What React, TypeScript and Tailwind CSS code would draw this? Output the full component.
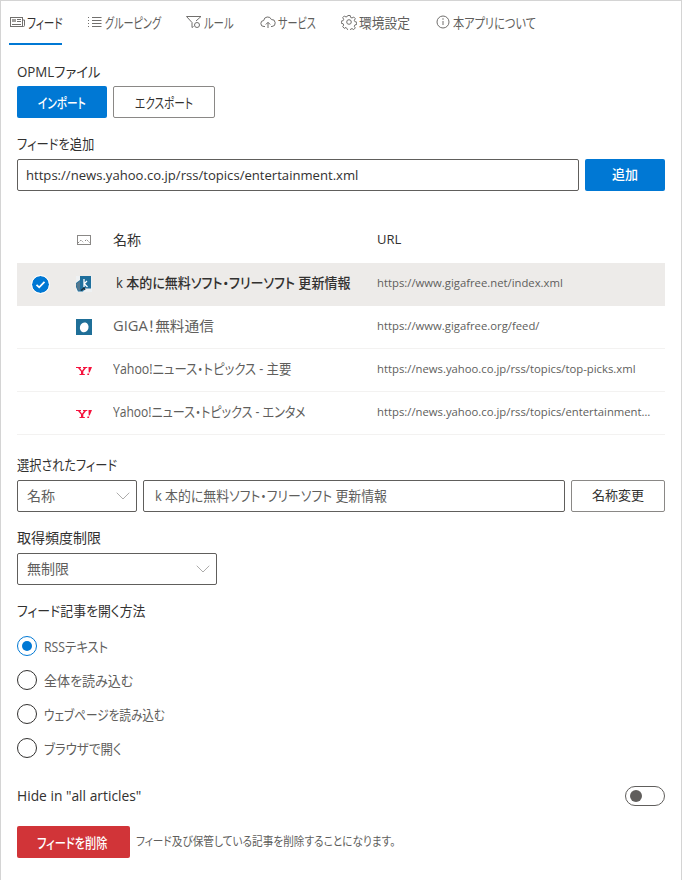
import React from "react";
import { ChevronDown } from "lucide-react";

const font = "font-['Open_Sans','Noto_Sans_CJK_JP',sans-serif] [font-feature-settings:'palt']";

/* Narrow kana of the reference: the text is squeezed sideways inside a box of its real width. */
function Sq({ w, s, children }: { w: string; s: string; children: React.ReactNode }) {
  return (
    <span className={`inline-block whitespace-nowrap ${w}`}>
      <span className={`inline-block origin-left ${s}`}>{children}</span>
    </span>
  );
}

function TabIcon({ name }: { name: string }) {
  const c = { width: 16, height: 16, viewBox: "0 0 16 16", fill: "none", stroke: "#716f6d", strokeWidth: 1 } as const;
  if (name === "feed")
    return (
      <svg {...c}>
        <rect x="1.5" y="3.5" width="12" height="9" />
        <rect x="3" y="5" width="4" height="3" fill="#a19f9d" stroke="none" />
        <path d="M8 5.500h4M8 7.500h4M3 10.500h9M13.500 6h2v5.500a1 1 0 0 1-1 1h-1" />
      </svg>
    );
  if (name === "group")
    return (
      <svg {...c}>
        <path d="M5 3.500h9.500M5 6.500h9.500M5 9.500h9.500M5 12.500h9.500" />
        <path d="M1.500 3v1M1.500 6v1M1.500 9v1M1.500 12v1" />
      </svg>
    );
  if (name === "rule")
    return (
      <svg {...c}>
        <path d="M.5 2.500h14.500l-5 4.500M.5 2.500 6 8.500v5l1.500-1" />
        <circle cx="11" cy="11" r="2.500" />
      </svg>
    );
  if (name === "cloud")
    return (
      <svg {...c}>
        <path d="M5 12.500H4a3 3 0 0 1-.3-6A4 4 0 0 1 11.400 5.500 3.500 3.500 0 0 1 12 12.500h-1" />
        <path d="M8 14V8.500M5.800 10.500 8 8.300l2.200 2.200" />
      </svg>
    );
  if (name === "gear")
    return (
      <svg {...c}>
        <circle cx="8" cy="8" r="2.300" />
        <path d="M6.800 1.500h2.400l.4 1.900 1.400.6 1.700-1 1.600 1.700-1 1.600.6 1.400 1.800.4v2.400l-1.800.4-.6 1.400 1 1.600-1.600 1.700-1.700-1-1.400.6-.4 1.900H6.800l-.4-1.900L5 13.400l-1.700 1-1.600-1.700 1-1.600-.6-1.400-1.800-.4V7.100l1.800-.4.600-1.400-1-1.600 1.600-1.700 1.700 1 1.400-.6z" />
      </svg>
    );
  return (
    <svg {...c}>
      <circle cx="8" cy="8" r="6" />
      <path d="M8 7v4" />
      <circle cx="8" cy="5" r="0.700" fill="#605e5c" stroke="none" />
    </svg>
  );
}

const tabs = [
  { icon: "feed", label: "フィード", w: "w-[35px]", s: "scale-x-[.76]", active: true },
  { icon: "group", label: "グルーピング", w: "w-[56px]", s: "scale-x-[.72]" },
  { icon: "rule", label: "ルール", w: "w-[31px]", s: "scale-x-[.74]" },
  { icon: "cloud", label: "サービス", w: "w-[38px]", s: "scale-x-[.72]" },
  { icon: "gear", label: "環境設定", w: "w-[51px]", s: "scale-x-[.91]" },
  { icon: "info", label: "本アプリについて", w: "w-[82px]", s: "scale-x-[.8]" },
];

function YahooIcon() {
  return (
    <svg width="16" height="16" viewBox="0 0 16 16" fill="#f5123d">
      <path d="M0 5h5v1H4l2 2.700L8 6H7V5h4.300v1H10L7.300 9.500V12h1.500v1H3.500v-1H5V9.500L2 6H0z" />
      <path d="M12.500 5H16l-2.300 5.500h-1zM11.500 11.500h1.800L13 13h-1.800z" />
    </svg>
  );
}

function KIcon() {
  return (
    <svg width="16" height="16" viewBox="0 0 16 16">
      <rect width="16" height="16" fill="#eef1f3" />
      <path d="M4 0h11v12.500H9L7 15.500H2L0 11V7l4-3z" fill="#1f6f9c" />
      <path d="M0 8l4-3v9.500H2z" fill="#54788f" />
      <path d="M8 3v8M8 8l3-3M8 7.500l3.500 3.500" stroke="#fff" strokeWidth="1.300" fill="none" />
      <path d="M5 14.500l3-2.500 1 2" stroke="#1c2b36" strokeWidth="1.200" fill="none" />
    </svg>
  );
}

function GigaIcon() {
  return (
    <svg width="16" height="16" viewBox="0 0 16 16">
      <rect width="16" height="16" fill="#1f6f98" />
      <ellipse cx="8.300" cy="8.300" rx="4.300" ry="5" fill="#fff" transform="rotate(15 8 8)" />
    </svg>
  );
}

const rows = [
  { icon: <KIcon />, name: "k 本的に無料ソフト・フリーソフト 更新情報", w: "w-[260px]", s: "scale-x-[.93]", url: "https://www.gigafree.net/index.xml", selected: true },
  { icon: <GigaIcon />, name: "GIGA！無料通信", w: "w-[264px]", s: "scale-x-[1.05]", url: "https://www.gigafree.org/feed/" },
  { icon: <YahooIcon />, name: "Yahoo!ニュース・トピックス - 主要", w: "w-[264px]", s: "scale-x-[.885]", url: "https://news.yahoo.co.jp/rss/topics/top-picks.xml" },
  { icon: <YahooIcon />, name: "Yahoo!ニュース・トピックス - エンタメ", w: "w-[264px]", s: "scale-x-[.862]", url: "https://news.yahoo.co.jp/rss/topics/entertainment.xml" },
];

function Radio({ label, w, s, checked }: { label: string; w: string; s: string; checked?: boolean }) {
  return (
    <label className="flex items-center h-5 gap-[7px] text-[14px]">
      <span className={`flex items-center justify-center w-5 h-5 rounded-full border ${checked ? "border-[#0078d4]" : "border-[#323130]"}`}>
        {checked && <span className="w-2.5 h-2.5 rounded-full bg-[#0078d4]" />}
      </span>
      <span className="text-[#605e5c] flex">
        <Sq w={w} s={s}>{label}</Sq>
      </span>
    </label>
  );
}

function Select({ value, className }: { value: string; className: string }) {
  return (
    <div className={`flex items-center justify-between h-8 pl-[9px] pr-[1px] border border-[#605e5c] rounded-[2px] text-[14px] text-[#605e5c] ${className}`}>
      <span className="pb-[2px]">{value}</span>
      <ChevronDown size={24} strokeWidth={0.7} color="#8a8886" />
    </div>
  );
}

export default function App() {
  return (
    <div className={`${font} w-[682px] h-[880px] bg-white border-x border-t border-[#d4d4d4] text-[#323130] overflow-hidden`}>
      <nav className="flex h-11 pl-2">
        {tabs.map((t) => (
          <div key={t.label} className={`flex items-center gap-[2px] h-11 mr-[25px] border-b-2 text-[14px] text-[#605e5c] ${t.active ? "border-[#0078d4] text-[#323130]" : "border-transparent"}`}>
            <TabIcon name={t.icon} />
            <Sq w={t.w} s={t.s}>{t.label}</Sq>
          </div>
        ))}
      </nav>

      <main className="pl-4 pr-4">
        <div className="mt-[14px] h-[27px] leading-[26px] text-[14px]">
          <Sq w="w-[80px]" s="scale-x-[.95]">OPMLファイル</Sq>
        </div>
        <div className="flex gap-1.5">
          <button className="flex items-center justify-center w-[90px] h-8 rounded-[2px] bg-[#0078d4] text-white text-[14px] font-medium">
            <Sq w="w-[49px]" s="scale-x-[.76]">インポート</Sq>
          </button>
          <button className="flex items-center justify-center w-[102px] h-8 rounded-[2px] border border-[#8a8886] bg-white text-[14px]">
            <Sq w="w-[58px]" s="scale-x-[.76]">エクスポート</Sq>
          </button>
        </div>

        <div className="mt-[12px] h-[29px] leading-[28px] text-[14px]">
          <Sq w="w-[76px]" s="scale-x-[.88]">フィードを追加</Sq>
        </div>
        <div className="flex gap-1.5">
          <input readOnly value="https://news.yahoo.co.jp/rss/topics/entertainment.xml" className="w-[562px] h-8 px-2 border border-[#605e5c] rounded-[2px] text-[13.100px] text-[#323130] outline-none" />
          <button className="w-20 h-8 rounded-[2px] bg-[#0078d4] text-white text-[13px] font-medium">追加</button>
        </div>

        <div className="mt-[29px] w-[648px]">
          <div className="flex items-center h-[43px] pb-1 text-[14px]">
            <div className="w-[59px]" />
            <div className="w-[37px] flex">
              <svg width="16" height="16" viewBox="0 0 16 16" fill="none" stroke="#8a8886">
                <rect x="1.500" y="3.500" width="13" height="9" />
                <path d="M2 11l3-3 2.500 2.500M9 9l1.500-1.500L14 11" strokeDasharray="1.500 1" />
              </svg>
            </div>
            <div className="w-[264px]">名称</div>
            <div className="text-[13px] font-medium">URL</div>
          </div>
          {rows.map((r) => (
            <div key={r.name} className={`flex items-center h-[43px] border-b ${r.selected ? "bg-[#edebe9] border-transparent" : "border-[#f3f2f1]"}`}>
              <div className="w-[59px] flex pl-[15px]">
                {r.selected && (
                  <span className="flex items-center justify-center w-[17px] h-[17px] rounded-full bg-[#0078d4] outline outline-1 outline-white">
                    <svg width="11" height="11" viewBox="0 0 11 11" fill="none" stroke="#fff" strokeWidth="1.800">
                      <path d="M1.500 5.800 4.200 8.300 9.500 2.800" />
                    </svg>
                  </span>
                )}
              </div>
              <div className="w-[37px] flex">{r.icon}</div>
              <div className={`w-[264px] flex pb-[3px] text-[14px] ${r.selected ? "font-medium text-[#323130] pl-[3px]" : "text-[#605e5c]"}`}>
                <Sq w={r.w} s={r.s}>{r.name}</Sq>
              </div>
              <div className="w-[276px] pb-[2px] truncate text-[11.300px] text-[#605e5c]">{r.url}</div>
            </div>
          ))}
        </div>

        <div className="mt-[17px] h-[26px] leading-[26px] text-[14px]">
          <Sq w="w-[100px]" s="scale-x-[.87]">選択されたフィード</Sq>
        </div>
        <div className="mt-[2px] flex gap-1.5 w-[648px]">
          <Select value="名称" className="w-[120px]" />
          <div className="flex items-center flex-1 min-w-0 h-8 pl-[11px] pb-[2px] border border-[#605e5c] rounded-[2px] text-[14px] text-[#605e5c]">
            <Sq w="w-[232px]" s="scale-x-[.92]">k 本的に無料ソフト・フリーソフト 更新情報</Sq>
          </div>
          <button className="w-[94px] h-8 rounded-[2px] border border-[#8a8886] bg-white text-[13px]">名称変更</button>
        </div>

        <div className="mt-[12px] h-[28px] leading-[28px] text-[14px]">取得頻度制限</div>
        <div className="mt-[1px]">
          <Select value="無制限" className="w-[200px]" />
        </div>

        <div className="mt-[13px] h-[26px] leading-[26px] text-[14px]">
          <Sq w="w-[127px]" s="scale-x-[.92]">フィード記事を開く方法</Sq>
        </div>
        <div className="mt-[12px] flex flex-col gap-[14px]">
          <Radio label="RSSテキスト" w="w-[64px]" s="scale-x-[.88]" checked />
          <Radio label="全体を読み込む" w="w-[89px]" s="scale-x-[.93]" />
          <Radio label="ウェブページを読み込む" w="w-[120px]" s="scale-x-[.83]" />
          <Radio label="ブラウザで開く" w="w-[78px]" s="scale-x-[.89]" />
        </div>

        <div className="mt-[28px] flex items-center justify-between w-[648px] h-5">
          <span className="text-[13.800px]">Hide in "all articles"</span>
          <span className="flex items-center w-10 h-5 px-1 rounded-full border border-[#605e5c]">
            <span className="w-3 h-3 rounded-full bg-[#605e5c]" />
          </span>
        </div>

        <div className="mt-[20px] flex items-center gap-1.5">
          <button className="flex items-center justify-center w-[113px] h-8 rounded-[2px] bg-[#d13438] text-white text-[14px] font-medium">
            <Sq w="w-[73px]" s="scale-x-[.8]">フィードを削除</Sq>
          </button>
          <span className="flex text-[12px] text-[#605e5c]">
            <Sq w="w-[260px]" s="scale-x-[.887]">フィード及び保管している記事を削除することになります。</Sq>
          </span>
        </div>
      </main>
    </div>
  );
}
